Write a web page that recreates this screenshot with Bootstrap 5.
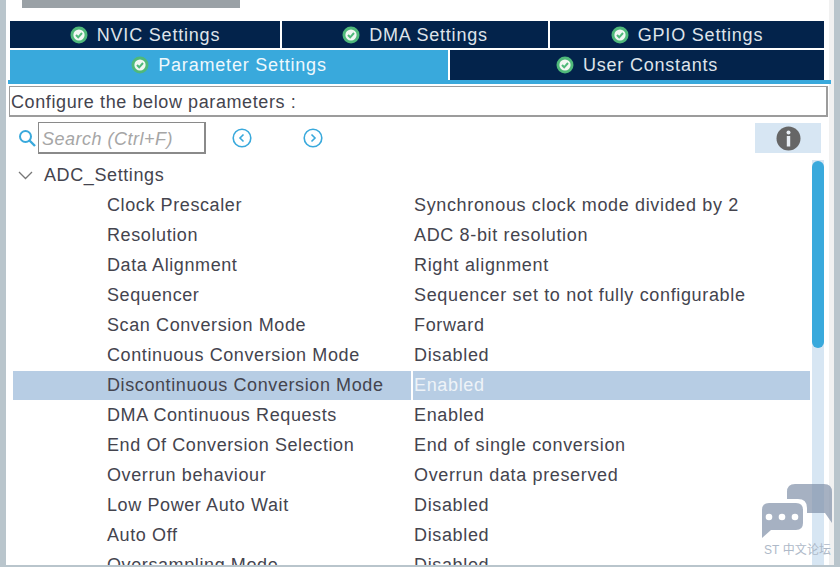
<!DOCTYPE html>
<html lang="en">

<head>
  <meta charset="UTF-8" />
  <title>ADC Configuration</title>
  <link href="https://cdn.jsdelivr.net/npm/bootstrap@5.3.0/dist/css/bootstrap.min.css" rel="stylesheet" />
  <style>
    html, body { height: 567px; overflow: hidden; background: #fff; }
    body { font-family: "Liberation Sans", Arial, sans-serif; color: #44444e; font-size: 18px; letter-spacing: .6px; }
    .shell { height: 567px; border-left: 6px solid #b9c5cc; border-right: 6px solid #b9c5cc; border-bottom: 2px solid #b9c5cc; position: relative; overflow: hidden; box-shadow: inset -5px 0 #f1f1f1; }
    .top-btn { width: 218px; height: 8px; margin-left: 16px; background: #9aa1a6; }
    .tabs-wrap { margin: 13px 10px 0 4px; }
    .tab-row { gap: 2px; }
    .tab-row + .tab-row { margin-top: 2px; }
    .cube-tab { background: #03234b; color: #dfe4ea; height: 27px; display: flex; align-items: center; justify-content: center; gap: 9px; letter-spacing: .8px; line-height: 1; }
    .tab-row.second .cube-tab { height: 30px; }
    .cube-tab.on { background: #39a9dc; color: #eef8fc; }
    .tab-n { width: 270px; }
    .tab-d { width: 266px; }
    .tab-g { flex: 1; }
    .tab-p { width: 438px; }
    .tab-u { flex: 1; }
    .tab-line { height: 4px; background: #39a9dc; margin: 0 -7px 0 -2px; }
    .cfg-box { margin: 2px 6px 0 3px; height: 31px; border: 1px solid #9c9c9c; border-bottom-width: 2px; border-right-width: 2px; padding-left: 1px; line-height: 30px; white-space: nowrap; background: #fff; }
    .search-row { height: 32px; margin: 5px 0 0 12px; padding-right: 13px; }
    .search-box { width: 168px; height: 32px; border: 1px solid #8a8a8a; border-width: 1px 2px 2px 1px; color: #a6a6a6; font-style: italic; line-height: 32px; padding-left: 3px; margin-left: 2px; letter-spacing: .5px; }
    .nav-a { margin-left: 26px; }
    .nav-b { margin-left: 51px; }
    .info-btn { width: 66px; height: 30px; background: #d7e6f3; }
    .tree-area { margin-top: 6px; height: 405px; overflow: hidden; }
    .tree-list { flex: 1; min-width: 0; padding-left: 7px; }
    .tree-row { height: 30px; line-height: 30px; white-space: nowrap; }
    .tree-head { padding-left: 5px; gap: 11px; }
    .p-name { width: 398px; padding-left: 94px; flex: none; }
    .p-val { flex: 1; padding-left: 3px; letter-spacing: .65px; }
    .tree-row.sel { padding-top: 1px; }
    .tree-row.sel .p-name { background: #b7cde4; line-height: 28px; }
    .tree-row.sel .p-val { background: #b7cde4; color: #eef3f8; margin: 0 2px 0 2px; padding-left: 1px; line-height: 28px; }
    .scroll-track { width: 12px; background: #d7e6f3; margin-right: 10px; flex: none; padding-top: 1px; }
    .scroll-thumb { height: 187px; background: #39a9dc; border-radius: 6px; }
    .forum-mark { position: absolute; left: 749px; top: 484px; width: 80px; color: #aeb9c8; font-size: 12px; letter-spacing: .1px; font-family: "Liberation Sans", "Noto Sans CJK SC", sans-serif; }
    .forum-mark svg { display: block; }
    .forum-mark span { display: block; margin: 1px 0 0 9px; line-height: 18px; white-space: nowrap; }
  </style>
</head>

<body>
  <div class="shell">
    <div class="top-btn"></div>

    <div class="tabs-wrap">
      <div class="d-flex tab-row">
        <div class="cube-tab tab-n"><svg width="18" height="18" viewBox="0 0 18 18"><circle cx="9" cy="9" r="8.5" fill="#4fb97a"/><circle cx="9" cy="9" r="5.6" fill="#f2f7f3"/><path d="M6 9l2.2 2.3L12 7" fill="none" stroke="#4fb97a" stroke-width="2"/></svg>NVIC Settings</div>
        <div class="cube-tab tab-d"><svg width="18" height="18" viewBox="0 0 18 18"><circle cx="9" cy="9" r="8.5" fill="#4fb97a"/><circle cx="9" cy="9" r="5.6" fill="#f2f7f3"/><path d="M6 9l2.2 2.3L12 7" fill="none" stroke="#4fb97a" stroke-width="2"/></svg>DMA Settings</div>
        <div class="cube-tab tab-g"><svg width="18" height="18" viewBox="0 0 18 18"><circle cx="9" cy="9" r="8.5" fill="#4fb97a"/><circle cx="9" cy="9" r="5.6" fill="#f2f7f3"/><path d="M6 9l2.2 2.3L12 7" fill="none" stroke="#4fb97a" stroke-width="2"/></svg>GPIO Settings</div>
      </div>
      <div class="d-flex tab-row second">
        <div class="cube-tab tab-p on"><svg width="18" height="18" viewBox="0 0 18 18"><circle cx="9" cy="9" r="8.5" fill="#4fb97a"/><circle cx="9" cy="9" r="5.6" fill="#f2f7f3"/><path d="M6 9l2.2 2.3L12 7" fill="none" stroke="#4fb97a" stroke-width="2"/></svg>Parameter Settings</div>
        <div class="cube-tab tab-u"><svg width="18" height="18" viewBox="0 0 18 18"><circle cx="9" cy="9" r="8.5" fill="#4fb97a"/><circle cx="9" cy="9" r="5.6" fill="#f2f7f3"/><path d="M6 9l2.2 2.3L12 7" fill="none" stroke="#4fb97a" stroke-width="2"/></svg>User Constants</div>
      </div>
      <div class="tab-line"></div>
    </div>

    <div class="cfg-box">Configure the below parameters :</div>

    <div class="d-flex align-items-center search-row">
      <svg width="18" height="18" viewBox="0 0 18 18"><circle cx="7.5" cy="7.5" r="5.5" fill="none" stroke="#39a9dc" stroke-width="2"/><path d="M11.5 11.5L17 17" stroke="#39a9dc" stroke-width="2.4"/></svg>
      <div class="search-box">Search (Ctrl+F)</div>
      <svg class="nav-a" width="20" height="20" viewBox="0 0 20 20"><circle cx="10" cy="10" r="8.8" fill="none" stroke="#39a9dc" stroke-width="1.6"/><path d="M11.5 6.5L8 10l3.5 3.5" fill="none" stroke="#39a9dc" stroke-width="1.6"/></svg>
      <svg class="nav-b" width="20" height="20" viewBox="0 0 20 20"><circle cx="10" cy="10" r="8.8" fill="none" stroke="#39a9dc" stroke-width="1.6"/><path d="M8.5 6.5L12 10l-3.500 3.5" fill="none" stroke="#39a9dc" stroke-width="1.6"/></svg>
      <div class="info-btn ms-auto d-flex align-items-center justify-content-center">
        <svg width="25" height="25" viewBox="0 0 25 25"><circle cx="12.500" cy="12.500" r="12" fill="#666"/><circle cx="12.500" cy="6.500" r="2" fill="#e8eef4"/><rect x="10.800" y="10" width="3.400" height="10.500" fill="#e8eef4"/></svg>
      </div>
    </div>

    <div class="d-flex tree-area">
      <div class="tree-list" id="treeList">
        <div class="tree-row d-flex align-items-center tree-head">
          <svg width="15" height="9" viewBox="0 0 15 9"><path d="M1 1l6.500 6.500L14 1" fill="none" stroke="#777" stroke-width="1.300"/></svg>
          <span>ADC_Settings</span>
        </div>
      </div>
      <div class="scroll-track"><div class="scroll-thumb"></div></div>
    </div>

    <div class="forum-mark">
      <svg width="80" height="56" viewBox="0 0 80 56">
        <path d="M32 15V8q0-8 8-8h29q8 0 8 8v31l-7-10H52V24q0-9-9-9z" fill="#8090a8" fill-opacity=".7"/>
        <path d="M14 19h27q7 0 7 7v13q0 7-7 7H16L7 54V26q0-7 7-7z" fill="#8090a8" fill-opacity=".7"/>
        <circle cx="14" cy="33" r="3.300" fill="#fff"/><circle cx="27" cy="33" r="3.300" fill="#fff"/><circle cx="40" cy="33" r="3.300" fill="#fff"/>
      </svg>
      <span>ST 中文论坛</span>
    </div>
  </div>

  <script>
    // name, value of each parameter row
    const params = [
      ["Clock Prescaler", "Synchronous clock mode divided by 2"],
      ["Resolution", "ADC 8-bit resolution"],
      ["Data Alignment", "Right alignment"],
      ["Sequencer", "Sequencer set to not fully configurable"],
      ["Scan Conversion Mode", "Forward"],
      ["Continuous Conversion Mode", "Disabled"],
      ["Discontinuous Conversion Mode", "Enabled"],
      ["DMA Continuous Requests", "Enabled"],
      ["End Of Conversion Selection", "End of single conversion"],
      ["Overrun behaviour", "Overrun data preserved"],
      ["Low Power Auto Wait", "Disabled"],
      ["Auto Off", "Disabled"],
      ["Oversampling Mode", "Disabled"]
    ];
    const list = document.getElementById("treeList");
    params.forEach((p) => {
      const row = document.createElement("div");
      row.className = "tree-row d-flex";
      if (p[0] === "Discontinuous Conversion Mode") row.classList.add("sel");
      const name = document.createElement("div");
      name.className = "p-name";
      name.textContent = p[0];
      const val = document.createElement("div");
      val.className = "p-val";
      val.textContent = p[1];
      row.append(name);
      row.append(val);
      list.append(row);
    });
  </script>
  <script src="https://cdn.jsdelivr.net/npm/bootstrap@5.3.0/dist/js/bootstrap.bundle.min.js"></script>
</body>

</html>
